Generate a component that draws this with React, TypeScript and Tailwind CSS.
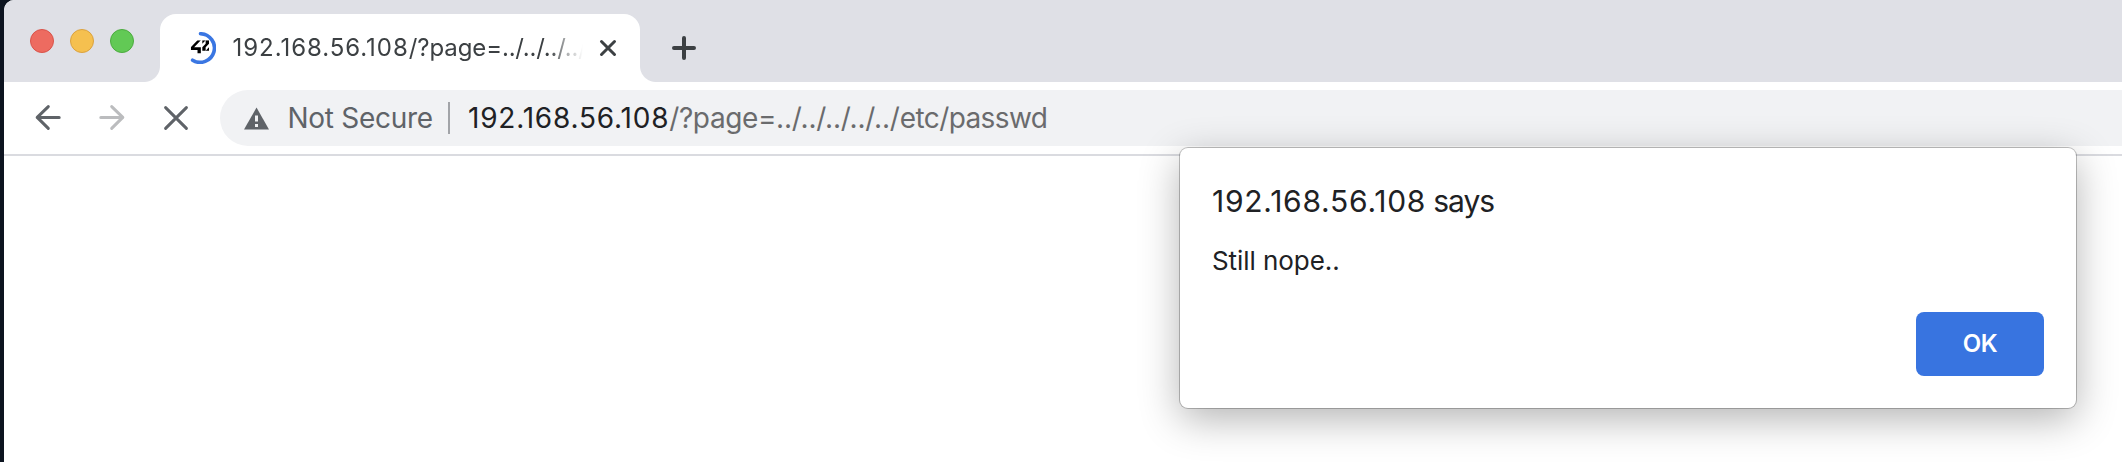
import type { ReactNode } from "react";

function TrafficLights() {
  return (
    <div className="mt-[29px] ml-[26px] flex h-6 w-[130px] gap-4">
      <span className="size-6 rounded-full border border-[#d9534a] bg-[#ed6b60]" />
      <span className="size-6 rounded-full border border-[#dba23f] bg-[#f5c04f]" />
      <span className="size-6 rounded-full border border-[#4cab3f] bg-[#62c955]" />
    </div>
  );
}

function LoadingFavicon() {
  return (
    <svg className="size-8 shrink-0" viewBox="0 0 32 32" fill="none">
      <path d="M16.5 1.75A14.3 14.3 0 1 1 8.6 28.2" stroke="#3a76e2" strokeWidth="3.6" strokeLinecap="round" />
      <svg x="6.8" y="8.2" width="18.2" height="13.4" viewBox="32 -51 896 629" preserveAspectRatio="none">
        <g fill="#000">
          <polygon points="32,412.6 362.1,412.6 362.1,578 526.8,578 526.8,279.1 197.3,279.1 526.8,-51.1 362.1,-51.1 32,279.1" />
          <polygon points="597.9,114.2 762.7,-51.1 597.9,-51.1" />
          <polygon points="762.7,114.2 597.9,279.1 597.9,443.9 762.7,443.9 762.7,279.1 928,114.2 928,-51.1 762.7,-51.1" />
          <polygon points="928,279.1 762.7,443.9 928,443.9" />
        </g>
      </svg>
    </svg>
  );
}

function Tab() {
  return (
    <div className="flex h-[68px] w-[480px] items-center rounded-t-2xl bg-white pl-6">
      <LoadingFavicon />
      <div className="ml-[16.5px] flex w-[360px] pb-px text-2xl leading-8 whitespace-nowrap text-[#3c4043] [mask-image:linear-gradient(to_right,black_316px,rgba(0,0,0,0.45)_333px,transparent_350px)]">
        <span className="tracking-[0.95px]">192.168.56.108</span>
        <span className="tracking-[-0.1px]">/?page=</span>
        <span className="tracking-[-0.2px]">../../../../</span>
      </div>
      <svg className="ml-[5.5px] size-[20px] shrink-0" viewBox="0 0 20 20" stroke="#3c4043" strokeWidth="3" strokeLinecap="round">
        <path d="M3.5 3.5l13 13M16.5 3.5l-13 13" />
      </svg>
    </div>
  );
}

function TabStrip() {
  return (
    <div className="flex h-[82px] bg-[#dfe0e6]">
      <TrafficLights />
      <div className="flex h-[82px] w-[512px] items-end -ml-4">
        <span className="size-4 shrink-0 bg-[radial-gradient(circle_at_0_0,#dfe0e6_15.5px,white_16.5px)]" />
        <Tab />
        <span className="size-4 shrink-0 bg-[radial-gradient(circle_at_100%_0,#dfe0e6_15.5px,white_16.5px)]" />
      </div>
      <svg className="mt-9 ml-4 size-6" viewBox="0 0 24 24" stroke="#3c4043" strokeWidth="4" strokeLinecap="round">
        <path d="M12 2v20M2 12h20" />
      </svg>
    </div>
  );
}

function NavIcon({ className, children }: { className: string; children: ReactNode }) {
  return (
    <svg className={"size-7 shrink-0 " + className} viewBox="0 0 28 28" fill="none" strokeWidth="3" strokeLinecap="round" strokeLinejoin="round">
      {children}
    </svg>
  );
}

function Omnibox() {
  return (
    <div className="ml-[30px] flex h-14 flex-1 items-center rounded-l-full bg-[#f1f2f4] pl-6 text-[28px] leading-8 whitespace-nowrap text-[#5f6368]">
      <svg className="size-[25px] shrink-0" viewBox="0 0 25 25">
        <path d="M12.5 1.5L25 23.5H0z" fill="#5f6368" />
        <path d="M11 9.5h3v6h-3zM11 18h3v3h-3z" fill="#f1f2f4" />
      </svg>
      <span className="ml-[18.5px] w-[160.5px] tracking-[-0.29px]">Not Secure</span>
      <span className="h-8 w-0.5 bg-[#a2a4a8]" />
      <div className="ml-[18px] flex text-[#6a6b6d]">
        <span className="tracking-[0.8px] text-[#202124]">192.168.56.108</span>
        <span className="tracking-[-0.4px]">/?page=</span>
        <span className="tracking-[-0.2px]">../../../../../</span>
        <span className="tracking-[-0.6px]">etc/passwd</span>
      </div>
    </div>
  );
}

function Toolbar() {
  return (
    <div className="flex h-[74px] items-center border-b-2 border-[#dadbe0] bg-white pl-[30px]">
      <NavIcon className="stroke-[#5f6368]">
        <path d="M25.2 13.4H3.2M14.3 2.6L3.2 13.4l11.1 11" />
      </NavIcon>
      <NavIcon className="ml-9 stroke-[#bbbcbe]">
        <path d="M2.8 13.4h22M13.7 2.6l11.1 10.8-11.1 11" />
      </NavIcon>
      <NavIcon className="ml-9 stroke-[#5f6368]">
        <path d="M3.6 3.6l20.8 20.8M24.4 3.6L3.6 24.4" />
      </NavIcon>
      <Omnibox />
    </div>
  );
}

function AlertDialog() {
  return (
    <div
      role="alertdialog"
      className="absolute top-[148px] left-[1180px] flex h-[260px] w-[896px] flex-col rounded-[8px] bg-white px-8 pt-[35px] pb-8 text-[#202124] shadow-[0_0_0_1px_rgba(0,0,0,0.24),0_11px_40px_rgba(0,0,0,0.3)]"
    >
      <div className="flex text-[30px] leading-9">
        <span className="tracking-[0.75px]">192.168.56.108</span>
        <span className="ml-[7px] tracking-[-1px]">says</span>
      </div>
      <p className="mt-[26px] text-[26px] leading-8 tracking-[-0.06px]">Still nope..</p>
      <button className="mt-auto h-16 w-32 self-end rounded-[8px] bg-[#3874e0] pb-px text-2xl font-semibold tracking-[-0.5px] text-white">
        OK
      </button>
    </div>
  );
}

export default function App() {
  return (
    <div className="relative h-[462px] w-full overflow-hidden bg-[#0d1420] pl-1 font-['Inter',sans-serif]">
      <div className="h-full overflow-hidden rounded-tl-[10px] bg-white">
        <TabStrip />
        <Toolbar />
      </div>
      <AlertDialog />
    </div>
  );
}
